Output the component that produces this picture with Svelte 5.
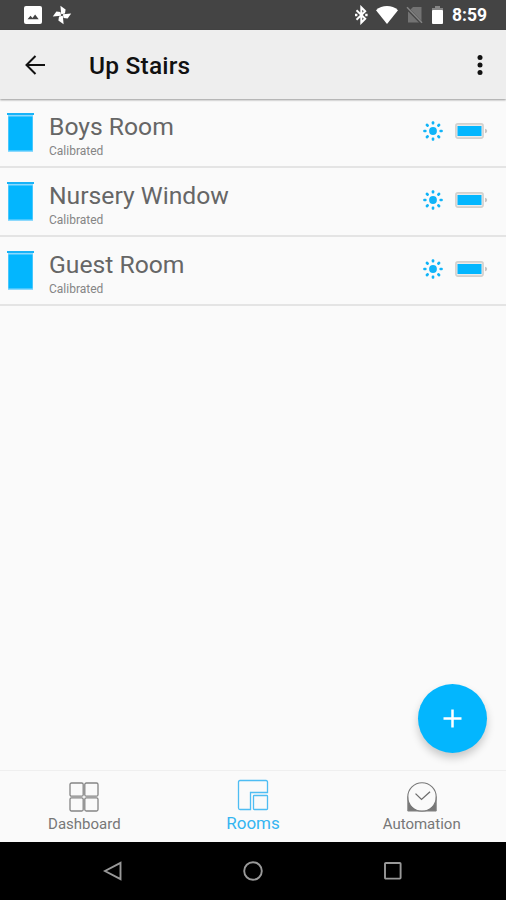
<script lang="ts">
  type Shade = { id: number; name: string; status: string; battery: number }

  let title = 'Up Stairs'

  let shades: Shade[] = $state([
    { id: 1, name: 'Boys Room', status: 'Calibrated', battery: 100 },
    { id: 2, name: 'Nursery Window', status: 'Calibrated', battery: 100 },
    { id: 3, name: 'Guest Room', status: 'Calibrated', battery: 100 },
  ])

  const tabs = ['Dashboard', 'Rooms', 'Automation']
  let active = $state('Rooms')

  const rays = [0, 45, 90, 135, 180, 225, 270, 315]
</script>

<div class="screen">
  <!-- Status bar -->
  <div class="status-bar">
    <div class="status-left">
      <svg width="18" height="18" viewBox="0 0 18 18">
        <rect width="18" height="18" rx="2" fill="#fff" />
        <path d="M3.5 13.2l3-3.4 2 2.1 2.6-3.3 3.6 4.6z" fill="#444" />
      </svg>
      <svg width="20" height="20" viewBox="0 0 20 20">
        <g fill="#fff">
          {#each [0, 90, 180, 270] as angle}
            <path d="M9.2 9.2L8.4.8l5.2 3.6-.6 4z" transform="rotate({angle} 10 10)" />
          {/each}
        </g>
      </svg>
    </div>
    <div class="status-right">
      <svg class="bluetooth" width="13" height="20" viewBox="0 0 13 20">
        <path d="M1.5 5.3l8.7 8.5-3.9 3.9V2.3l3.9 3.9-8.7 8.5" fill="none" stroke="#fff" stroke-width="2" />
        <path d="M0 8.8h2.4v2.4H0zM10.2 8.8h2.4v2.4h-2.4z" fill="#fff" />
      </svg>
      <svg class="wifi" width="22" height="18" viewBox="0 0 22 18">
        <path d="M11 18L0 4.2C6-1.4 16-1.4 22 4.2z" fill="#fff" />
      </svg>
      <svg class="sim" width="17" height="18" viewBox="0 0 17 18">
        <path d="M7 1h8.5v15.5H2V6z" fill="#737373" />
        <path d="M0 1l16 16.5" stroke="#444" stroke-width="3" />
        <path d="M1 1.2l15 15.6" stroke="#858585" stroke-width="1.5" />
      </svg>
      <svg class="battery" width="11" height="18" viewBox="0 0 11 18">
        <path d="M3 0h5v2h3v3H0V2h3z" fill="#858585" />
        <rect y="4" width="11" height="14" rx="1" fill="#fff" />
      </svg>
      <span class="clock">8:59</span>
    </div>
  </div>

  <header class="app-bar">
    <button class="icon-btn" aria-label="Back">
      <svg width="20" height="20" viewBox="0 0 20 20" fill="none" stroke="#111" stroke-width="2">
        <path d="M20 10H2M10.5 1L1.5 10l9 9" />
      </svg>
    </button>
    <h1>{title}</h1>
    <button class="icon-btn more" aria-label="More options">
      <svg width="6" height="20" viewBox="0 0 6 20" fill="#111">
        <circle cx="3" cy="2.6" r="2.5" />
        <circle cx="3" cy="10" r="2.5" />
        <circle cx="3" cy="17.4" r="2.5" />
      </svg>
    </button>
  </header>

  <main>
    <ul>
      {#each shades as shade (shade.id)}
        <li>
          <svg class="shade" width="27" height="39" viewBox="0 0 27 39">
            <rect x="1" width="25" height="39" fill="#8cd9fd" />
            <rect width="27" height="2" fill="#18b3f8" />
            <rect x="1.5" y="3.5" width="24" height="34" fill="#03b6fe" />
          </svg>
          <div class="info">
            <span class="name">{shade.name}</span>
            <span class="state">{shade.status}</span>
          </div>
          <svg class="sun" width="20" height="20" viewBox="0 0 20 20" fill="#10b4f8">
            <circle cx="10" cy="10" r="3.9" />
            {#each rays as angle}
              <rect x="8.7" y="0.2" width="2.6" height="3.4" rx="1" transform="rotate({angle} 10 10)" />
            {/each}
          </svg>
          <svg class="level" width="33" height="16" viewBox="0 0 33 16">
            <rect x="0.9" y="0.9" width="27.2" height="14.2" rx="2" fill="#ecebea" stroke="#d3d1ce" stroke-width="1.6" />
            <rect x="2.5" y="3" width={24 * shade.battery / 100} height="10" fill="#03b6fe" />
            <path d="M30 5.8q2.2.2 2.2 2.2T30 10.2z" fill="#c4c4c4" />
          </svg>
        </li>
      {/each}
    </ul>

    <button class="fab" aria-label="Add">
      <svg width="19" height="19" viewBox="0 0 19 19" stroke="#fff" stroke-width="2.5">
        <path d="M9.5.5v18M.5 9.5h18" />
      </svg>
    </button>
  </main>

  <nav class="tabs">
    {#each tabs as tab}
      <button class="tab" class:active={active === tab} onclick={() => (active = tab)}>
        {#if tab === 'Dashboard'}
          <svg width="30" height="30" viewBox="0 0 30 30" fill="none" stroke="#858585" stroke-width="1.3">
            <rect x="1" y="1" width="13.2" height="13.2" rx="1.5" />
            <rect x="15.8" y="1" width="13.2" height="13.2" rx="1.5" />
            <rect x="1" y="15.8" width="13.2" height="13.2" rx="1.5" />
            <rect x="15.8" y="15.8" width="13.2" height="13.2" rx="1.5" />
          </svg>
        {:else if tab === 'Rooms'}
          <svg width="32" height="32" viewBox="0 0 32 32" fill="none" stroke="#4ebdf3" stroke-width="1.3">
            <path d="M30.5 13.5V3q0-1.5-1.5-1.5H3Q1.5 1.5 1.5 3v26q0 1.5 1.5 1.5h10.5v-17z" />
            <rect x="16.5" y="16.5" width="14" height="14" rx="0.8" />
          </svg>
        {:else}
          <svg width="32" height="30" viewBox="0 0 32 31">
            <path d="M1.3 16V30h29.4V16" fill="#777" />
            <circle cx="16" cy="15.5" r="14.7" fill="#fafafa" stroke="#777" stroke-width="1.1" />
            <path d="M1.3 15V30h29.4V15" fill="none" stroke="#858585" stroke-width="1" />
            <path d="M9.3 12l6.2 6 8.8-8" fill="none" stroke="#6e6e6e" stroke-width="1.4" />
          </svg>
        {/if}
        <span>{tab}</span>
      </button>
    {/each}
  </nav>

  <!-- Android navigation -->
  <div class="system-nav">
    <svg width="20" height="20" viewBox="0 0 20 20">
      <path d="M17.5 1.8v16.4L2 10z" />
    </svg>
    <svg width="20" height="20" viewBox="0 0 20 20">
      <circle cx="10" cy="10" r="8.8" />
    </svg>
    <svg width="20" height="20" viewBox="0 0 20 20">
      <rect x="2" y="2" width="15.6" height="15.6" rx="0.8" />
    </svg>
  </div>
</div>

<style>
  :global(body) {
    margin: 0;
  }

  .screen {
    display: flex;
    flex-direction: column;
    width: 100%;
    height: 100vh;
    overflow: hidden;
    background: #fafafa;
    font-family: Roboto, 'Liberation Sans', sans-serif;
  }

  svg {
    display: block;
    flex-shrink: 0;
  }

  button {
    padding: 0;
    border: 0;
    background: none;
    font-family: inherit;
  }

  /* Status bar */
  .status-bar {
    display: flex;
    justify-content: space-between;
    height: 30px;
    padding: 0 19px 0 24px;
    flex-shrink: 0;
    box-sizing: border-box;
    background: #444;
    color: #fff;
  }
  .status-left,
  .status-right {
    display: flex;
    align-items: center;
  }
  .status-left { gap: 10px; }
  .wifi { margin-left: 8px; }
  .sim { margin-left: 8px; }
  .battery { margin-left: 9px; }

  .clock {
    margin-left: 9px;
    font-size: 17.5px;
    font-weight: 700;
    line-height: 32px;
  }

  /* App bar */
  .app-bar {
    position: relative;
    display: flex;
    align-items: center;
    height: 69px;
    padding: 0 23px 0 25px;
    flex-shrink: 0;
    box-sizing: border-box;
    background: #eee;
    box-shadow: 0 1px 2px rgba(0, 0, 0, 0.4);
  }
  h1 {
    margin: 2px 0 0 44px;
    color: #111;
    font-size: 24.5px;
    font-weight: 500;
    letter-spacing: 0.2px;
    line-height: 30px;
  }
  .more { margin-left: auto; }

  /* Shade list */
  main {
    position: relative;
    flex: 1;
  }
  ul {
    margin: 0;
    padding: 0;
    list-style: none;
  }
  li {
    display: flex;
    align-items: flex-start;
    height: 69px;
    padding: 14px 18px 0 7px;
    box-sizing: border-box;
    border-bottom: 2px solid #e4e4e4;
  }
  .info {
    display: flex;
    flex: 1;
    flex-direction: column;
    margin-left: 15px;
  }
  .name {
    color: #666;
    font-size: 24.7px;
    line-height: 28px;
  }
  .state {
    margin-top: 3px;
    color: #858585;
    font-size: 12px;
    line-height: 14px;
  }
  .sun { margin-top: 8px; }
  .level { margin: 10px 0 0 12px; }

  .fab {
    position: absolute;
    right: 19px;
    bottom: 17px;
    display: flex;
    align-items: center;
    justify-content: center;
    width: 69px;
    height: 69px;
    border-radius: 50%;
    background: #03b6fe;
    box-shadow: 0 5px 8px rgba(0, 0, 0, 0.2);
  }

  /* Bottom tabs */
  .tabs {
    display: flex;
    height: 72px;
    flex-shrink: 0;
    box-sizing: border-box;
    border-top: 1px solid #efefef;
  }
  .tab {
    display: flex;
    flex: 1;
    flex-direction: column;
    align-items: center;
    padding-top: 11px;
    color: #777;
    font-size: 15px;
    line-height: 18px;
  }
  .tab span { margin-top: 3px; }
  .tab.active {
    padding-top: 8px;
    color: #35b5f1;
    font-size: 17px;
  }

  .system-nav {
    display: flex;
    align-items: center;
    justify-content: space-between;
    height: 58px;
    padding: 0 103px;
    flex-shrink: 0;
    box-sizing: border-box;
    background: #000;
  }
  .system-nav path,
  .system-nav circle,
  .system-nav rect {
    fill: none;
    stroke: #999;
    stroke-width: 1.9;
  }
</style>
